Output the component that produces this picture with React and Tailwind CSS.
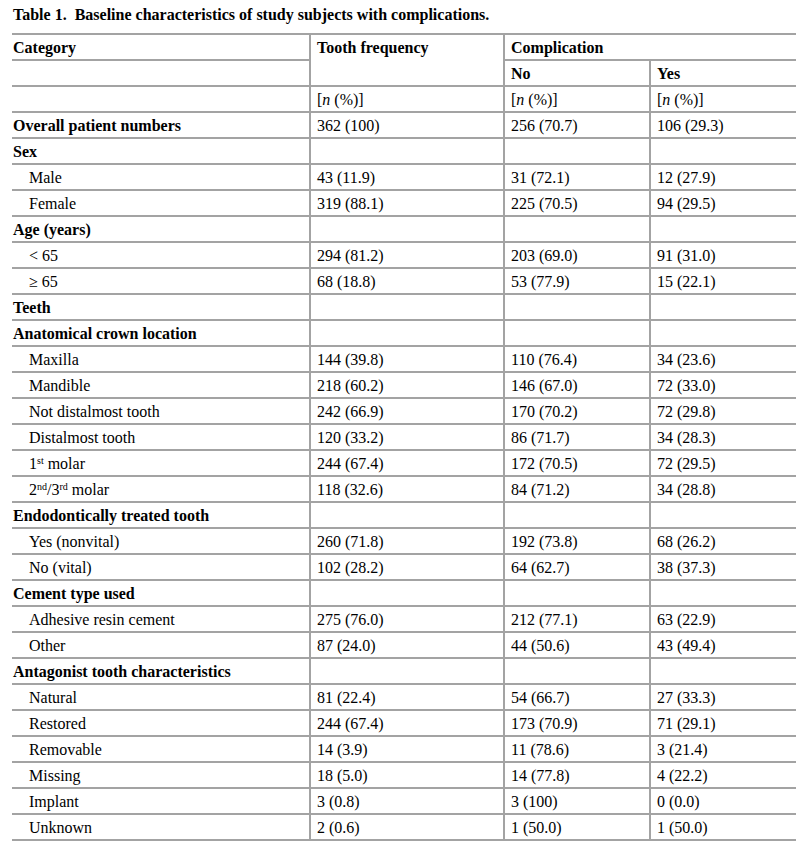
import React from 'react'

/* ── Table rows: label / total / no / yes, head = bold section label ── */
const Sup = ({ children }) => <sup className="text-[10px]">{children}</sup>

const ROWS = [
  { label: 'Overall patient numbers', total: '362 (100)', no: '256 (70.7)', yes: '106 (29.3)', head: true },
  { label: 'Sex', head: true },
  { label: 'Male', total: '43 (11.9)', no: '31 (72.1)', yes: '12 (27.9)' },
  { label: 'Female', total: '319 (88.1)', no: '225 (70.5)', yes: '94 (29.5)' },
  { label: 'Age (years)', head: true },
  { label: '< 65', total: '294 (81.2)', no: '203 (69.0)', yes: '91 (31.0)' },
  { label: '≥ 65', total: '68 (18.8)', no: '53 (77.9)', yes: '15 (22.1)' },
  { label: 'Teeth', head: true },
  { label: 'Anatomical crown location', head: true },
  { label: 'Maxilla', total: '144 (39.8)', no: '110 (76.4)', yes: '34 (23.6)' },
  { label: 'Mandible', total: '218 (60.2)', no: '146 (67.0)', yes: '72 (33.0)' },
  { label: 'Not distalmost tooth', total: '242 (66.9)', no: '170 (70.2)', yes: '72 (29.8)' },
  { label: 'Distalmost tooth', total: '120 (33.2)', no: '86 (71.7)', yes: '34 (28.3)' },
  { label: <>1<Sup>st</Sup> molar</>, total: '244 (67.4)', no: '172 (70.5)', yes: '72 (29.5)' },
  { label: <>2<Sup>nd</Sup>/3<Sup>rd</Sup> molar</>, total: '118 (32.6)', no: '84 (71.2)', yes: '34 (28.8)' },
  { label: 'Endodontically treated tooth', head: true },
  { label: 'Yes (nonvital)', total: '260 (71.8)', no: '192 (73.8)', yes: '68 (26.2)' },
  { label: 'No (vital)', total: '102 (28.2)', no: '64 (62.7)', yes: '38 (37.3)' },
  { label: 'Cement type used', head: true },
  { label: 'Adhesive resin cement', total: '275 (76.0)', no: '212 (77.1)', yes: '63 (22.9)' },
  { label: 'Other', total: '87 (24.0)', no: '44 (50.6)', yes: '43 (49.4)' },
  { label: 'Antagonist tooth characteristics', head: true },
  { label: 'Natural', total: '81 (22.4)', no: '54 (66.7)', yes: '27 (33.3)' },
  { label: 'Restored', total: '244 (67.4)', no: '173 (70.9)', yes: '71 (29.1)' },
  { label: 'Removable', total: '14 (3.9)', no: '11 (78.6)', yes: '3 (21.4)' },
  { label: 'Missing', total: '18 (5.0)', no: '14 (77.8)', yes: '4 (22.2)' },
  { label: 'Implant', total: '3 (0.8)', no: '3 (100)', yes: '0 (0.0)' },
  { label: 'Unknown', total: '2 (0.6)', no: '1 (50.0)', yes: '1 (50.0)' },
]

const line = 'border-[#a3a3a3]'
const cell = `h-[26px] border-b-2 ${line} px-[6px] pt-[1px] align-middle whitespace-nowrap`
const first = `h-[26px] border-b-2 ${line} pl-[1px] pr-2 pt-[1px] align-middle whitespace-nowrap`
const side = `border-l-2 ${line}`

const NPct = () => <>[<i>n</i> (%)]</>

export default function App() {
  return (
    <div className="bg-white text-black pl-[12px] pt-[6px] pb-[2px] w-[800px] font-['Liberation_Serif',serif] text-[16px] leading-[18px]">
      <div className="pl-[1px] font-bold h-[27px]">
        Table 1.&nbsp; Baseline characteristics of study subjects with complications.
      </div>

      <table className={`w-[784px] table-fixed border-collapse border-t-2 ${line}`}>
        <colgroup>
          <col className="w-[298px]" />
          <col className="w-[194px]" />
          <col className="w-[146px]" />
          <col className="w-[146px]" />
        </colgroup>
        <thead>
          <tr>
            <td className={`${first} font-bold`}>Category</td>
            <td rowSpan={2} className={`${cell} ${side} font-bold align-top pt-[4px]`}>Tooth frequency</td>
            <td colSpan={2} className={`${cell} ${side} font-bold`}>Complication</td>
          </tr>
          <tr>
            <td className={first}></td>
            <td className={`${cell} ${side} font-bold`}>No</td>
            <td className={`${cell} ${side} font-bold`}>Yes</td>
          </tr>
          <tr>
            <td className={first}></td>
            <td className={`${cell} ${side}`}><NPct /></td>
            <td className={`${cell} ${side}`}><NPct /></td>
            <td className={`${cell} ${side}`}><NPct /></td>
          </tr>
        </thead>
        <tbody>
          {ROWS.map((r, i) => (
            <tr key={i}>
              <td className={`${first} ${r.head ? 'font-bold' : 'pl-[17px]'}`}>{r.label}</td>
              <td className={`${cell} ${side}`}>{r.total}</td>
              <td className={`${cell} ${side}`}>{r.no}</td>
              <td className={`${cell} ${side}`}>{r.yes}</td>
            </tr>
          ))}
        </tbody>
      </table>
    </div>
  )
}
